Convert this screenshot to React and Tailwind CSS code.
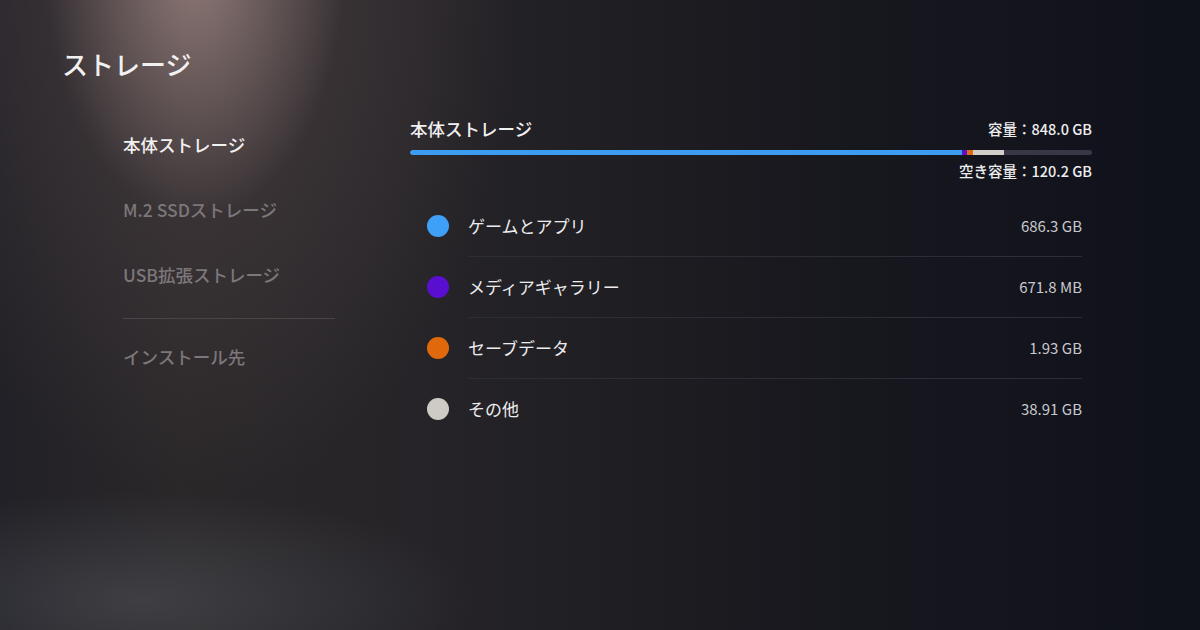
import React from 'react'

const items = [
  { label: 'ゲームとアプリ', value: '686.3 GB', color: 'bg-[#3ea1f7]' },
  { label: 'メディアギャラリー', value: '671.8 MB', color: 'bg-[#5a0fd0]' },
  { label: 'セーブデータ', value: '1.93 GB', color: 'bg-[#e0690c]' },
  { label: 'その他', value: '38.91 GB', color: 'bg-[#cecbc5]' },
]

export default function App() {
  return (
    <div
      className="w-[1200px] h-[630px] overflow-hidden text-[#ececee] bg-[radial-gradient(ellipse_150px_260px_at_195px_-40px,rgba(200,170,165,0.5),transparent),radial-gradient(ellipse_320px_520px_at_200px_-20px,rgba(120,100,100,0.5)_0%,rgba(80,68,70,0.4)_45%,transparent_100%),radial-gradient(ellipse_330px_110px_at_140px_600px,rgba(95,100,108,0.4),transparent),linear-gradient(90deg,#222127_0%,#2a2729_15%,#262428_35%,#19191f_65%,#0f111b_100%)]"
      style={{ fontFamily: '"Noto Sans CJK JP", "Noto Sans", sans-serif' }}
    >
      <h1 className="pl-[62px] pt-[46px] text-[26px] leading-[36px] font-medium text-[#f2f0f0]">ストレージ</h1>

      <div className="flex">
        {/* left nav */}
        <nav className="ml-[123px] w-[212px] mt-[31px]">
          <div className="h-[65px] flex items-center text-[17.5px] font-medium text-[#f2f0f0]">本体ストレージ</div>
          <div className="h-[65px] flex items-center text-[17.5px] font-medium text-[#7c777a]">M.2 SSDストレージ</div>
          <div className="h-[65px] flex items-center text-[17.5px] font-medium text-[#7c777a]">USB拡張ストレージ</div>
          <div className="mt-[10px] border-t border-[#4a4446]" />
          <div className="h-[76px] flex items-center text-[17.5px] font-medium text-[#7c777a]">インストール先</div>
        </nav>

        {/* right panel */}
        <section className="ml-[75px] w-[682px] mt-[35px]">
          <div className="flex items-center justify-between h-[24px]">
            <span className="text-[17.5px] font-medium text-[#f0eff1]">本体ストレージ</span>
            <span className="text-[14.5px] font-medium text-[#eeeeef]">容量：848.0 GB</span>
          </div>
          <div className="mt-[9px] h-[5px] rounded-full bg-[#363945] flex overflow-hidden">
            <div className="w-[552px] bg-[#3b9cf2] rounded-l-full" />
            <div className="w-[5px] bg-[#5a12c8]" />
            <div className="w-[6px] bg-[#e06a10]" />
            <div className="w-[31px] bg-[#d2cfca]" />
          </div>
          <div className="mt-[6px] h-[20px] flex items-center justify-end text-[14.5px] font-medium text-[#eeeeef]">
            空き容量：120.2 GB
          </div>

          <ul className="mt-[15px] pl-[17px] pr-[10px]">
            {items.map((it, i) => (
              <li key={it.label} className="flex flex-col">
                <div className="h-[60px] flex items-center">
                  <span className={`w-[22px] h-[22px] rounded-full ${it.color}`} />
                  <span className="ml-[19px] text-[17px] text-[#ececee]">{it.label}</span>
                  <span className="ml-auto text-[15px] text-[#c9c9cd]">{it.value}</span>
                </div>
                {i < items.length - 1 && <div className="ml-[41px] border-t border-[#2c2d37]" />}
              </li>
            ))}
          </ul>
        </section>
      </div>
    </div>
  )
}
